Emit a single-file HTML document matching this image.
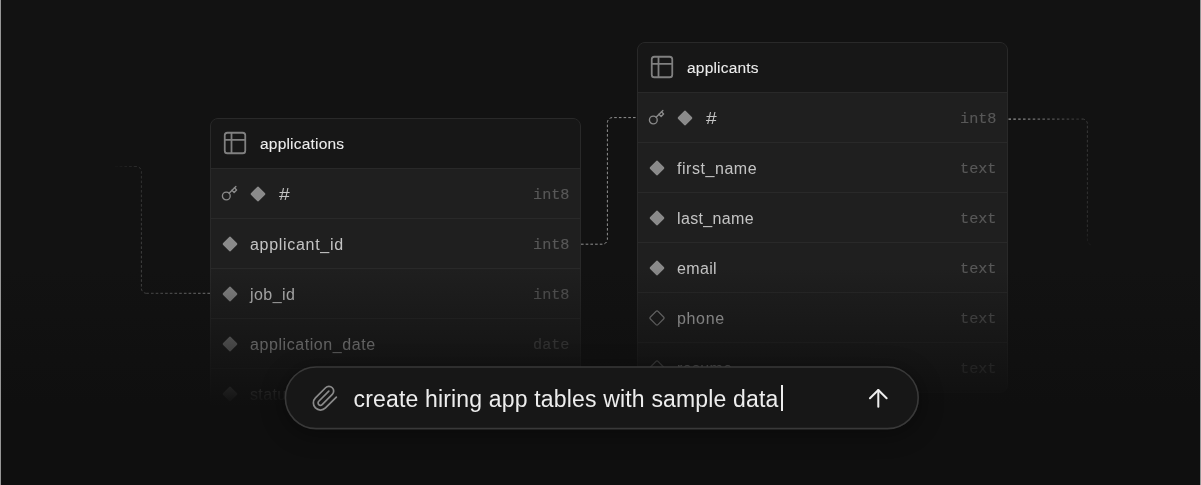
<!DOCTYPE html>
<html lang="en">
<head>
<meta charset="utf-8">
<title>create hiring app tables with sample data</title>
<style>
*{box-sizing:border-box;margin:0;padding:0}
html,body{width:1201px;height:485px;overflow:hidden;background:#121212}
body{position:relative;font-family:"Liberation Sans",sans-serif;color:#ededed}
.stage{position:absolute;left:0;top:0;width:1201px;height:485px;overflow:hidden;will-change:transform;
  background:#121212}
.edge{position:absolute;top:0;width:1px;height:485px;background:#969696}
.edge.l{left:0}.edge.r{left:1200px}
svg.wires{position:absolute;left:0;top:0}
.tbl{position:absolute;width:371px;border:1px solid #292929;border-radius:8px;overflow:hidden;background:#1f1f1f}
.t1{left:210px;top:118px}
.t2{left:637px;top:42px}
.fade{position:absolute;left:0;top:0;width:1201px;height:485px;background:linear-gradient(180deg,rgba(15,15,15,0) 268px,rgba(15,15,15,1) 406px)}
.hd{height:49px;background:#171717;display:flex;align-items:center;padding-left:12px;font-size:15.5px;color:#ededed;letter-spacing:.2px;-webkit-text-stroke:.08px #ededed}
.hd svg{margin-right:13px;flex:none;position:relative;top:-1px}
.row{height:50px;border-top:1px solid #292929;display:flex;align-items:center;padding:0 10.5px 0 11px;font-size:16px;color:#c4c4c4;letter-spacing:.35px}
.row .ic{flex:none;margin-right:12px;position:relative;top:0}
.row.k{padding-left:10px}
.row .ic.key{margin-right:12.2px;top:-.4px}
.hash{display:inline-block;transform:scale(1.2,.98);transform-origin:50% 70%;margin-left:1.5px}
.row .nm{flex:1;position:relative;top:1px}
.row .ty{font-family:"Liberation Mono",monospace;font-size:15.2px;color:#585858;letter-spacing:0;position:relative;top:1px;-webkit-text-stroke:.15px #585858}
.bar{position:absolute;left:285px;top:367px;width:634px;height:62px;border-radius:31px;background:#171717;box-shadow:0 4px 22px 2px rgba(0,0,0,.35)}
.bar svg.frame{left:-285px;top:-367px;overflow:visible}
.bar .txt{position:absolute;left:68.5px;top:2.5px;height:59px;line-height:59px;font-size:23px;color:#ededed;white-space:nowrap;letter-spacing:.17px}
.bar .cur{position:absolute;left:496.3px;top:18.2px;width:2px;height:26px;background:#ededed}
.bar svg{position:absolute}
</style>
</head>
<body>
<div class="stage">
<svg class="wires" width="1201" height="485" viewBox="0 0 1201 485" fill="none">
  <defs>
    <linearGradient id="gl1" gradientUnits="userSpaceOnUse" x1="210" y1="0" x2="141" y2="0"><stop offset="0" stop-color="#9c9c9c" stop-opacity=".85"/><stop offset="1" stop-color="#9c9c9c" stop-opacity=".38"/></linearGradient>
    <linearGradient id="gl2" gradientUnits="userSpaceOnUse" x1="0" y1="293" x2="0" y2="166"><stop offset="0" stop-color="#9c9c9c" stop-opacity=".38"/><stop offset="1" stop-color="#9c9c9c" stop-opacity=".2"/></linearGradient>
    <linearGradient id="gl3" gradientUnits="userSpaceOnUse" x1="141" y1="0" x2="112" y2="0"><stop offset="0" stop-color="#9c9c9c" stop-opacity=".22"/><stop offset="1" stop-color="#9c9c9c" stop-opacity="0"/></linearGradient>
    <linearGradient id="gr1" gradientUnits="userSpaceOnUse" x1="1008" y1="0" x2="1086" y2="0"><stop offset="0" stop-color="#9a9a9a"/><stop offset="1" stop-color="#9a9a9a" stop-opacity=".12"/></linearGradient>
    <linearGradient id="gr2" gradientUnits="userSpaceOnUse" x1="0" y1="119" x2="0" y2="246"><stop offset="0" stop-color="#9c9c9c" stop-opacity=".28"/><stop offset=".85" stop-color="#9c9c9c" stop-opacity=".2"/><stop offset="1" stop-color="#9c9c9c" stop-opacity=".05"/></linearGradient>
  </defs>
  <path d="M581 244.2H602.4a5 5 0 0 0 5-5V122.6a5 5 0 0 1 5-5H637" stroke="#929292" stroke-width="1" stroke-dasharray="2.6 2.1"/>
  <path d="M210 293.3H146.400" stroke="url(#gl1)" stroke-width="1" stroke-dasharray="2.6 2.1"/>
  <path d="M146.400 293.300a5 5 0 0 1-5-5V171.500a5 5 0 0 0-5-5" stroke="url(#gl2)" stroke-width="1" stroke-dasharray="2.6 2.1"/>
  <path d="M136.400 166.500H110" stroke="url(#gl3)" stroke-width="1" stroke-dasharray="2.6 2.1"/>
  <path d="M1008.500 119H1083" stroke="url(#gr1)" stroke-width="1.25" stroke-dasharray="2.5 2.35"/>
  <path d="M1082.400 119a5 5 0 0 1 5 5V240a5 5 0 0 0 5 5" stroke="url(#gr2)" stroke-width="1" stroke-dasharray="2.6 2.1"/>
</svg>

<div class="tbl t1">
  <div class="hd"><svg width="24" height="24" viewBox="0 0 24 24" fill="none" stroke="#808080" stroke-width="1.8"><rect x="1.75" y="1.75" width="20.5" height="20.5" rx="2.6"/><path d="M8.5 1.75V22.25M1.75 8.9H22.25"/></svg>applications</div>
  <div class="row k"><svg class="ic key" width="17" height="17" viewBox="0 0 24 24" fill="none" stroke="#8a8a8a" stroke-width="1.9" stroke-linecap="round" stroke-linejoin="round"><circle cx="7.5" cy="15.5" r="5.5"/><path d="m21 2-9.6 9.6"/><path d="m15.500 7.500 3 3L22 7l-3-3"/></svg><svg class="ic" width="16" height="16" viewBox="0 0 16 16"><rect x="2.4" y="2.4" width="11.2" height="11.2" rx="1.5" fill="#8a8a8a" transform="rotate(45 8 8)"/></svg><span class="nm"><span class="hash">#</span></span><span class="ty">int8</span></div>
  <div class="row"><svg class="ic" width="16" height="16" viewBox="0 0 16 16"><rect x="2.4" y="2.4" width="11.2" height="11.2" rx="1.5" fill="#8a8a8a" transform="rotate(45 8 8)"/></svg><span class="nm" style="letter-spacing:.7px">applicant_id</span><span class="ty">int8</span></div>
  <div class="row"><svg class="ic" width="16" height="16" viewBox="0 0 16 16"><rect x="2.4" y="2.4" width="11.2" height="11.2" rx="1.5" fill="#8a8a8a" transform="rotate(45 8 8)"/></svg><span class="nm" style="letter-spacing:.45px">job_id</span><span class="ty">int8</span></div>
  <div class="row"><svg class="ic" width="16" height="16" viewBox="0 0 16 16"><rect x="2.4" y="2.4" width="11.2" height="11.2" rx="1.5" fill="#8a8a8a" transform="rotate(45 8 8)"/></svg><span class="nm" style="letter-spacing:.57px">application_date</span><span class="ty">date</span></div>
  <div class="row"><svg class="ic" width="16" height="16" viewBox="0 0 16 16"><rect x="2.4" y="2.4" width="11.2" height="11.2" rx="1.5" fill="#8a8a8a" transform="rotate(45 8 8)"/></svg><span class="nm">status</span><span class="ty">text</span></div>
</div>

<div class="tbl t2">
  <div class="hd"><svg width="24" height="24" viewBox="0 0 24 24" fill="none" stroke="#808080" stroke-width="1.8"><rect x="1.75" y="1.75" width="20.5" height="20.5" rx="2.6"/><path d="M8.5 1.75V22.25M1.75 8.9H22.25"/></svg>applicants</div>
  <div class="row k"><svg class="ic key" width="17" height="17" viewBox="0 0 24 24" fill="none" stroke="#8a8a8a" stroke-width="1.9" stroke-linecap="round" stroke-linejoin="round"><circle cx="7.5" cy="15.5" r="5.5"/><path d="m21 2-9.6 9.6"/><path d="m15.500 7.500 3 3L22 7l-3-3"/></svg><svg class="ic" width="16" height="16" viewBox="0 0 16 16"><rect x="2.4" y="2.4" width="11.2" height="11.2" rx="1.5" fill="#8a8a8a" transform="rotate(45 8 8)"/></svg><span class="nm"><span class="hash">#</span></span><span class="ty">int8</span></div>
  <div class="row"><svg class="ic" width="16" height="16" viewBox="0 0 16 16"><rect x="2.4" y="2.4" width="11.2" height="11.2" rx="1.5" fill="#8a8a8a" transform="rotate(45 8 8)"/></svg><span class="nm" style="letter-spacing:.55px">first_name</span><span class="ty">text</span></div>
  <div class="row"><svg class="ic" width="16" height="16" viewBox="0 0 16 16"><rect x="2.4" y="2.4" width="11.2" height="11.2" rx="1.5" fill="#8a8a8a" transform="rotate(45 8 8)"/></svg><span class="nm">last_name</span><span class="ty">text</span></div>
  <div class="row"><svg class="ic" width="16" height="16" viewBox="0 0 16 16"><rect x="2.4" y="2.4" width="11.2" height="11.2" rx="1.5" fill="#8a8a8a" transform="rotate(45 8 8)"/></svg><span class="nm">email</span><span class="ty">text</span></div>
  <div class="row"><svg class="ic" width="16" height="16" viewBox="0 0 16 16"><rect x="2.65" y="2.65" width="10.7" height="10.7" rx="1.4" fill="none" stroke="#8a8a8a" stroke-width="1.25" transform="rotate(45 8 8)"/></svg><span class="nm" style="letter-spacing:.65px">phone</span><span class="ty">text</span></div>
  <div class="row"><svg class="ic" width="16" height="16" viewBox="0 0 16 16"><rect x="2.65" y="2.65" width="10.7" height="10.7" rx="1.4" fill="none" stroke="#8a8a8a" stroke-width="1.25" transform="rotate(45 8 8)"/></svg><span class="nm">resume</span><span class="ty">text</span></div>
</div>

<div class="fade"></div>

<div class="bar">
  <svg class="frame" width="1201" height="485" viewBox="0 0 1201 485" fill="none"><rect x="285.4" y="367" width="632.8" height="61.6" rx="30.8" fill="#171717" stroke="#393939" stroke-width="1.6"/></svg>
  <svg style="left:26.2px;top:16.6px" width="28.4" height="28.4" viewBox="0 0 24 24" fill="none" stroke="#8a8a8a" stroke-width="1.45" stroke-linecap="round" stroke-linejoin="round"><path d="m21.440 11.050-9.190 9.190a6 6 0 0 1-8.490-8.490l8.570-8.570A4 4 0 1 1 18 8.840l-8.590 8.570a2 2 0 0 1-2.830-2.830l8.490-8.480"/></svg>
  <div class="txt">create hiring app tables with sample data</div>
  <div class="cur"></div>
  <svg style="left:578.8px;top:16.5px" width="28.6" height="28.6" viewBox="0 0 24 24" fill="none" stroke="#ededed" stroke-width="1.7" stroke-linecap="round" stroke-linejoin="round"><path d="m5 12 7-7 7 7"/><path d="M12 19V5"/></svg>
</div>

<div class="edge l"></div><div class="edge r"></div>
</div>
</body>
</html>
